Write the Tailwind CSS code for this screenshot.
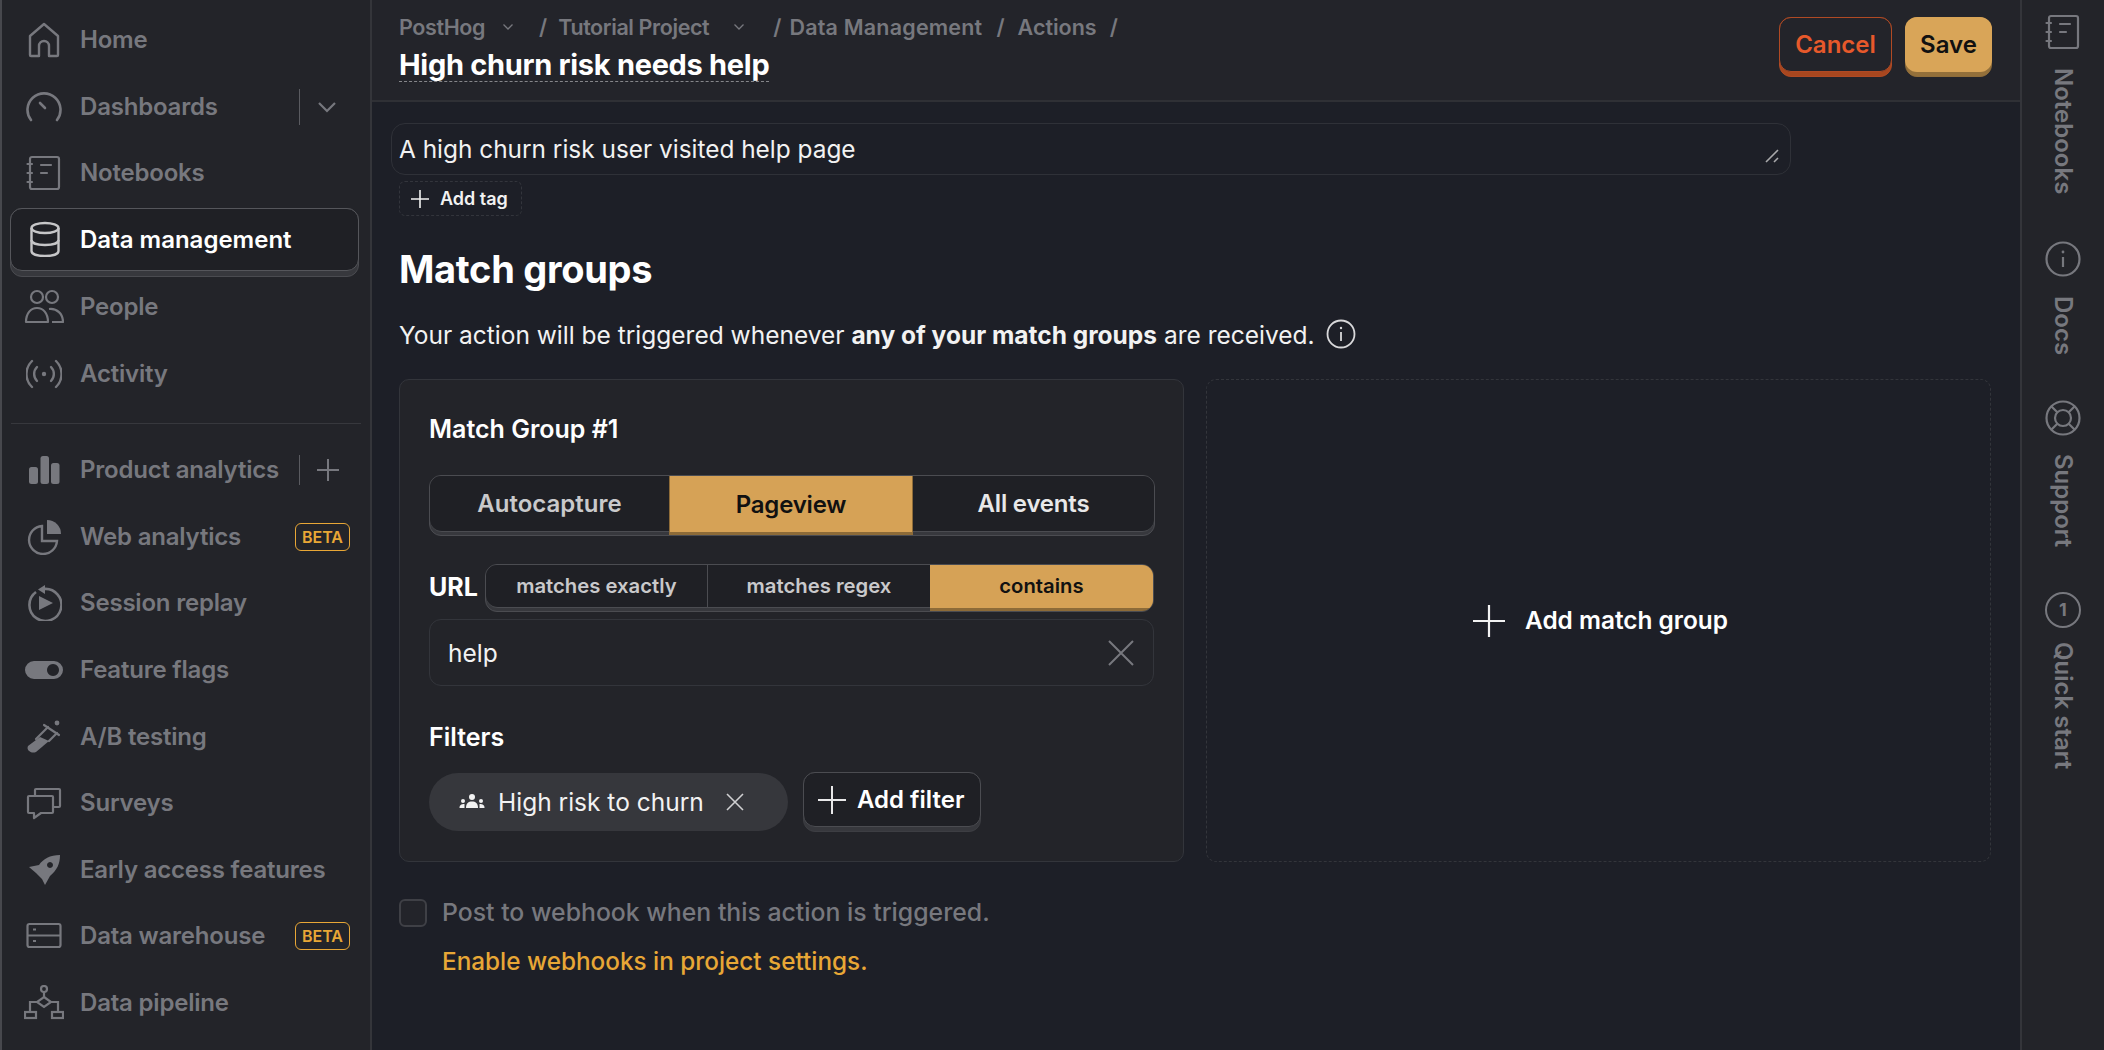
<!DOCTYPE html>
<html lang="en">
<head>
    <meta charset="UTF-8">
    <script src="https://cdn.jsdelivr.net/npm/@tailwindcss/browser@4"></script>
    <title>Action - PostHog</title>
</head>
<body class="bg-[#1d1f27] font-['Inter',sans-serif] overflow-hidden">
<div class="flex h-[1050px] w-[2104px]">

    <!-- Left nav -->
    <nav class="w-[372px] shrink-0 h-full bg-[#232429] border-l-2 border-l-[#47484d] border-r-2 border-r-[#34353a] pt-[7px] text-[24px] font-semibold text-[#77787e] tracking-[-0.2px] whitespace-nowrap">
        <div class="flex items-center h-[66.6px] pl-[24px] gap-[18px]">
            <svg class="w-9 h-9" viewBox="0 0 36 36" fill="none" stroke="currentColor" stroke-width="2.4" stroke-linejoin="round"><path d="M4 14 L18 2 L32 14 V33 a1 1 0 0 1 -1 1 H23 V24 a5 5 0 0 0 -10 0 V34 H5 a1 1 0 0 1 -1 -1 Z"/></svg>
            <span>Home</span>
        </div>
        <div class="flex items-center h-[66.6px] pl-[24px] gap-[18px]">
            <svg class="w-9 h-9" viewBox="0 0 36 36" fill="none" stroke="currentColor" stroke-width="2.6" stroke-linecap="round"><path d="M5 31 A16.5 16.5 0 1 1 31 31"/><path d="M14 14 L19 19"/></svg>
            <span>Dashboards</span>
            <span class="ml-auto h-9 w-px bg-[#5a5b60]"></span>
            <svg class="w-6 h-6 -ml-[3px] mr-[31px]" viewBox="0 0 24 24" fill="none" stroke="currentColor" stroke-width="2.2"><path d="M4 8 L12 16 L20 8"/></svg>
        </div>
        <div class="flex items-center h-[66.6px] pl-[24px] gap-[18px]">
            <svg class="w-9 h-9" viewBox="0 0 36 36" fill="none" stroke="currentColor" stroke-width="2.2" stroke-linecap="round"><rect x="4" y="2" width="29" height="32" rx="2"/><path d="M15 10 H25 M15 18 H21"/><path d="M1.5 9 H6 M1.5 18 H6 M1.5 27 H6"/></svg>
            <span>Notebooks</span>
        </div>
        <!-- active item -->
        <div class="ml-[8px] w-[349px] h-[69px] mt-[1px] rounded-[12px] border border-[#4a4b50] bg-[#37383d]">
            <div class="-m-px flex items-center h-[63px] pl-[15px] gap-[18px] rounded-[12px] border border-[#55565b] bg-[#1f2025] text-white tracking-normal">
                <svg class="w-9 h-9 ml-[1px] text-[#c6c6c8]" viewBox="0 0 36 36" fill="none" stroke="currentColor" stroke-width="2.4"><ellipse cx="18" cy="7" rx="13.5" ry="5"/><path d="M4.5 7 V30 C4.5 33 10 35 18 35 C26 35 31.5 33 31.5 30 V7"/><path d="M4.5 19 C4.5 22 10 24 18 24 C26 24 31.5 22 31.5 19"/></svg>
                <span class="-ml-[1px] pt-[2px]">Data management</span>
            </div>
        </div>
        <div class="flex items-center h-[66.6px] pl-[24px] gap-[18px] -mt-[3px]">
            <svg class="w-10 h-9 -ml-[2px] -mr-[2px]" viewBox="0 0 40 36" fill="none" stroke="currentColor" stroke-width="2.2" stroke-linejoin="round"><circle cx="13" cy="8" r="6"/><circle cx="28" cy="8" r="6"/><path d="M2 33 C2 24 7 19 13 19 C19 19 24 24 24 33 Z"/><path d="M25 20 C33 19 39 25 39 33 H28"/></svg>
            <span>People</span>
        </div>
        <div class="flex items-center h-[66.6px] pl-[24px] gap-[18px]">
            <svg class="w-9 h-9" viewBox="0 0 36 36" fill="none" stroke="currentColor" stroke-width="2.4" stroke-linecap="round"><circle cx="18" cy="18" r="2.2" fill="currentColor" stroke="none"/><path d="M11 11 A10 10 0 0 0 11 25 M25 11 A10 10 0 0 1 25 25"/><path d="M6 5 A18 18 0 0 0 6 31 M30 5 A18 18 0 0 1 30 31"/></svg>
            <span>Activity</span>
        </div>
        <div class="mx-[9px] mt-[16px] mb-[13px] h-px bg-[#37383d]"></div>
        <div class="flex items-center h-[66.6px] pl-[24px] gap-[18px]">
            <svg class="w-9 h-9" viewBox="0 0 36 36" fill="currentColor"><rect x="3" y="15" width="9" height="17" rx="2.5"/><rect x="14.5" y="4" width="8.5" height="28" rx="2.5"/><rect x="25" y="11" width="8.5" height="21" rx="2.5"/></svg>
            <span>Product analytics</span>
            <span class="ml-auto h-[30px] w-px bg-[#5a5b60]"></span>
            <svg class="w-6 h-6 -ml-[2px] mr-[30px]" viewBox="0 0 24 24" fill="none" stroke="currentColor" stroke-width="2"><path d="M12 1 V23 M1 12 H23"/></svg>
        </div>
        <div class="flex items-center h-[66.6px] pl-[24px] gap-[18px]">
            <svg class="w-9 h-9" viewBox="0 0 36 36" fill="none" stroke="currentColor" stroke-width="2.4"><path d="M16 7 A14 14 0 1 0 31 22 H16 Z"/><path d="M21 1 A14 14 0 0 1 35 15 H21 Z" fill="currentColor" stroke="none"/></svg>
            <span>Web analytics</span>
            <span class="ml-auto mr-[20px] w-[55px] h-[28px] flex items-center justify-center rounded-[6px] border border-[#e8a736] text-[#e8a736] text-[16px] font-semibold tracking-normal">BETA</span>
        </div>
        <div class="flex items-center h-[66.6px] pl-[24px] gap-[18px]">
            <svg class="w-9 h-9" viewBox="0 0 36 36" fill="none" stroke="currentColor" stroke-width="2.6"><path d="M10 7 A16 16 0 1 0 18 4"/><path d="M19 0 L12 4.5 L19 9 Z" fill="currentColor" stroke="none"/><path d="M13 11 L27 18 L13 25 Z" fill="currentColor" stroke="none"/></svg>
            <span>Session replay</span>
        </div>
        <div class="flex items-center h-[66.6px] pl-[24px] gap-[18px]">
            <svg class="w-10 h-9 -ml-[2px] -mr-[2px]" viewBox="0 0 40 36" fill="currentColor"><path fill-rule="evenodd" d="M10 9 H30 a9 9 0 0 1 0 18 H10 a9 9 0 0 1 0 -18 Z M29 12 a6 6 0 1 0 0.01 0 Z"/></svg>
            <span>Feature flags</span>
        </div>
        <div class="flex items-center h-[66.6px] pl-[24px] gap-[18px]">
            <svg class="w-9 h-9" viewBox="0 0 36 36" fill="none" stroke="currentColor" stroke-width="2.2" stroke-linecap="round" stroke-linejoin="round"><path d="M2 27 L14 18 L23 22 L10 33 C5 35 0 31 2 27 Z" fill="currentColor" stroke="none"/><path d="M10 20 L22 8 M23 22 L31 14"/><path d="M18 6 L33 16"/><circle cx="31" cy="4" r="2.4" fill="currentColor" stroke="none"/></svg>
            <span>A/B testing</span>
        </div>
        <div class="flex items-center h-[66.6px] pl-[24px] gap-[18px]">
            <svg class="w-9 h-9" viewBox="0 0 36 36" fill="none" stroke="currentColor" stroke-width="2.2" stroke-linejoin="round"><path d="M9 11 V5 a1 1 0 0 1 1 -1 H33 a1 1 0 0 1 1 1 V21 a1 1 0 0 1 -1 1 H27"/><path d="M3 11 H26 a1 1 0 0 1 1 1 V27 a1 1 0 0 1 -1 1 H15 L8 33 V28 H3 a1 1 0 0 1 -1 -1 V12 a1 1 0 0 1 1 -1 Z"/></svg>
            <span>Surveys</span>
        </div>
        <div class="flex items-center h-[66.6px] pl-[24px] gap-[18px]">
            <svg class="w-9 h-9" viewBox="0 0 36 36" fill="currentColor"><path fill-rule="evenodd" d="M34 3 C24 3 17 7 13 13 L3 15 L10 21 L16 27 L19 33 L24 24 C31 18 34 12 34 3 Z M24 10 a3 3 0 1 0 0.01 0 Z"/></svg>
            <span>Early access features</span>
        </div>
        <div class="flex items-center h-[66.6px] pl-[24px] gap-[18px]">
            <svg class="w-9 h-9" viewBox="0 0 36 36" fill="none" stroke="currentColor" stroke-width="2.2"><rect x="1.5" y="6" width="33" height="23" rx="2"/><path d="M1.5 17.5 H34.5"/><path d="M7 11.5 H10 M7 23 H10"/></svg>
            <span>Data warehouse</span>
            <span class="ml-auto mr-[20px] w-[55px] h-[28px] flex items-center justify-center rounded-[6px] border border-[#e8a736] text-[#e8a736] text-[16px] font-semibold tracking-normal">BETA</span>
        </div>
        <div class="flex items-center h-[66.6px] pl-[24px] gap-[18px]">
            <svg class="w-10 h-9 -ml-[2px] -mr-[2px]" viewBox="0 0 40 36" fill="none" stroke="currentColor" stroke-width="2.2"><circle cx="20" cy="4" r="3"/><path d="M20 7 V12"/><path d="M20 12 L27 17 L20 22 L13 17 Z"/><path d="M13 17 H6 V27 M27 17 H34 V27"/><rect x="1" y="27" width="11" height="6"/><rect x="28" y="27" width="11" height="6"/></svg>
            <span>Data pipeline</span>
        </div>
    </nav>

    <!-- Main column -->
    <div class="w-[1648px] shrink-0 flex flex-col">
        <header class="h-[102px] shrink-0 bg-[#23242a] border-b-2 border-[#2f3035] pl-[27px] pr-[28px] flex justify-between">
            <div>
                <div class="flex items-center mt-[15px] h-[24px] text-[21.5px] font-semibold text-[#77787e] whitespace-nowrap">
                    <span class="tracking-[-0.4px]">PostHog</span>
                    <svg class="w-3 h-3 ml-[17px]" viewBox="0 0 12 12" fill="none" stroke="currentColor" stroke-width="1.3"><path d="M1.5 3.5 L6 8 L10.5 3.5"/></svg>
                    <span class="ml-[25px] mr-[11px]">/</span>
                    <span class="tracking-[-0.4px]">Tutorial Project</span>
                    <svg class="w-3 h-3 ml-[24px]" viewBox="0 0 12 12" fill="none" stroke="currentColor" stroke-width="1.3"><path d="M1.5 3.5 L6 8 L10.5 3.5"/></svg>
                    <span class="ml-[28px] mr-[8px]">/</span>
                    <span class="tracking-[0.2px]">Data Management</span>
                    <span class="ml-[14px] mr-[13px]">/</span>
                    <span>Actions</span>
                    <span class="ml-[13px]">/</span>
                </div>
                <div class="mt-[10px] inline-block text-[29px] leading-[32px] font-bold text-white border-b border-dashed border-[#85868a] tracking-[-0.3px]">High churn risk needs help</div>
            </div>
            <div class="flex gap-[13px] pt-[17px]">
                <div class="w-[113px] h-[60px] rounded-[12px] border border-[#b04a24] bg-[#a8471f]">
                    <div class="-m-px h-[55px] rounded-[12px] border border-[#b04a24] bg-[#23242a] flex items-center justify-center text-[24px] font-semibold text-[#e7592b]">Cancel</div>
                </div>
                <div class="w-[87px] h-[60px] rounded-[12px] border border-[#8f6d3a] bg-[#94703a]">
                    <div class="-m-px h-[55px] rounded-[12px] bg-[#d9a558] flex items-center justify-center text-[24px] font-semibold text-[#111]">Save</div>
                </div>
            </div>
        </header>

        <main class="flex-1 pl-[27px] pr-[30px] pt-[21px] text-white">
            <div class="relative -ml-[8px] w-[1400px] h-[52px] rounded-[14px] border border-[#2f3138] pl-[7px] flex items-center text-[24.4px] text-[#f2f2f2]">
                A high churn risk user visited help page
                <svg class="absolute right-[10px] bottom-[10px] w-4 h-4" viewBox="0 0 16 16" fill="none" stroke="#a9a9ab" stroke-width="1.6"><path d="M2 14 L14 2 M10 14 L14 10"/></svg>
            </div>
            <div class="mt-[6px] w-[123px] h-[35px] rounded-[6px] border border-dashed border-[#33353c] flex items-center pl-[10px] gap-[10px] text-[18px] font-semibold text-[#f2f2f2] whitespace-nowrap">
                <svg class="w-[20px] h-[20px]" viewBox="0 0 20 20" fill="none" stroke="currentColor" stroke-width="1.6"><path d="M10 1 V19 M1 10 H19"/></svg>
                <span>Add tag</span>
            </div>

            <h2 class="mt-[30px] text-[38px] leading-[46px] font-bold tracking-[-0.3px]">Match groups</h2>
            <p class="mt-[26px] flex items-center text-[24.5px] leading-[34px] text-[#f2f2f2]">
                <span>Your action will be triggered whenever <b class="font-bold">any of your match groups</b> are received.</span>
                <svg class="ml-[11px] w-[30px] h-[30px] -mt-[2px]" viewBox="0 0 30 30" fill="none" stroke="#d8d8da" stroke-width="1.8"><circle cx="15" cy="15" r="13.5"/><path d="M15 13 V22"/><circle cx="15" cy="9" r="1.2" fill="#d8d8da" stroke="none"/></svg>
            </p>

            <div class="mt-[27px] grid grid-cols-[785px_785px] gap-[22px]">
                <div class="h-[483px] rounded-[10px] border border-[#33353b] bg-[#232429] pt-[29px] pl-[29px] pr-[29px]">
                    <h3 class="text-[25px] leading-[40px] font-semibold">Match Group #1</h3>

                    <div class="mt-[26px] flex h-[61px] w-[726px] rounded-[12px] border border-[#4b4c51] text-[24px] font-semibold text-[#c9c9cb] overflow-hidden bg-[#37383d]">
                        <div class="w-[239px] h-[56px] pt-px border-b border-[#4b4c51] bg-[#1f2025] rounded-bl-[12px] flex items-center justify-center">Autocapture</div>
                        <div class="w-[244px] h-full bg-[#8d6b38] border-x border-[#8d6b38] tracking-[-0.2px]"><div class="h-[56px] pt-px bg-[#d6a256] flex items-center justify-center text-[#111]">Pageview</div></div>
                        <div class="flex-1 h-[56px] pt-px border-b border-[#4b4c51] bg-[#1f2025] rounded-br-[12px] flex items-center justify-center text-[#e8e8e9] tracking-[-0.2px]">All events</div>
                    </div>

                    <div class="mt-[28px] flex items-center">
                        <span class="w-[56px] text-[25px] font-bold">URL</span>
                        <div class="flex h-[48px] w-[670px] rounded-[12px] border border-[#4b4c51] text-[20.3px] font-semibold text-[#c9c9cb] overflow-hidden bg-[#37383d]">
                            <div class="w-[222px] h-[43px] border-b border-r border-[#4b4c51] bg-[#1f2025] rounded-bl-[12px] flex items-center justify-center">matches exactly</div>
                            <div class="w-[222px] h-[43px] border-b border-[#4b4c51] bg-[#1f2025] flex items-center justify-center">matches regex</div>
                            <div class="flex-1 h-full bg-[#8d6b38]"><div class="h-[43px] bg-[#d6a256] flex items-center justify-center text-[#111]">contains</div></div>
                        </div>
                    </div>

                    <div class="mt-[7px] h-[67px] w-[725px] rounded-[12px] border border-[#33353b] flex items-center justify-between pl-[18px] pr-[19px] text-[24.5px] text-[#f2f2f2]">
                        <span class="pt-[2px]">help</span>
                        <svg class="w-[26px] h-[26px]" viewBox="0 0 26 26" fill="none" stroke="#77787e" stroke-width="2"><path d="M1 1 L25 25 M25 1 L1 25"/></svg>
                    </div>

                    <h4 class="mt-[34px] text-[25px] leading-[34px] font-semibold">Filters</h4>
                    <div class="mt-[19px] flex items-start gap-[15px]">
                        <div class="w-[359px] h-[58px] rounded-full bg-[#36373c] flex items-center pl-[30px] text-[24.5px] text-[#f2f2f2]">
                            <svg class="w-[26px] h-[22px]" viewBox="0 0 26 22" fill="currentColor"><circle cx="13" cy="6" r="3"/><path d="M7 17 C7 12 9.5 10.5 13 10.5 C16.5 10.5 19 12 19 17 Z"/><circle cx="4" cy="10" r="2"/><path d="M0.5 17 C0.5 14 2 13 5.5 13 V17 Z"/><circle cx="22" cy="10" r="2"/><path d="M25.5 17 C25.5 14 24 13 20.5 13 V17 Z"/></svg>
                            <span class="ml-[13px] whitespace-nowrap">High risk to churn</span>
                            <svg class="ml-[22px] w-[18px] h-[18px]" viewBox="0 0 18 18" fill="none" stroke="#d0d0d2" stroke-width="1.6"><path d="M1 1 L17 17 M17 1 L1 17"/></svg>
                        </div>
                        <div class="-mt-[1px] w-[178px] h-[60px] rounded-[12px] border border-[#3d3e43] bg-[#37383d]">
                            <div class="-m-px h-[55px] rounded-[12px] border border-[#4b4c51] bg-[#1f2025] flex items-center pl-[14px] gap-[11px] text-[24px] font-semibold whitespace-nowrap">
                                <svg class="w-[28px] h-[28px]" viewBox="0 0 28 28" fill="none" stroke="#e8e8e9" stroke-width="2"><path d="M14 0 V28 M0 14 H28"/></svg>
                                <span>Add filter</span>
                            </div>
                        </div>
                    </div>
                </div>

                <div class="h-[483px] rounded-[10px] border border-dashed border-[#33353b] flex items-center justify-center gap-[19px] pl-[3px] text-[24.4px] font-semibold">
                    <svg class="w-[34px] h-[34px]" viewBox="0 0 34 34" fill="none" stroke="#f2f2f2" stroke-width="2.2"><path d="M17 1 V33 M1 17 H33"/></svg>
                    <span>Add match group</span>
                </div>
            </div>

            <div class="mt-[32px] flex items-center gap-[15px] text-[24.8px] text-[#77787e] font-medium whitespace-nowrap">
                <span class="w-[28px] h-[28px] rounded-[6px] border-2 border-[#3f4046] bg-[#23242a]"></span>
                <span>Post to webhook when this action is triggered.</span>
            </div>
            <div class="mt-[12px] ml-[43px] text-[24.3px] font-medium text-[#e8a736]">Enable webhooks in project settings.</div>
        </main>
    </div>

    <!-- Right rail -->
    <aside class="flex-1 h-full bg-[#232429] border-l-2 border-[#34353a] pt-[14px] flex flex-col items-center text-[#77787e] text-[24px] font-semibold">
        <svg class="w-9 h-9" viewBox="0 0 36 36" fill="none" stroke="currentColor" stroke-width="2.2" stroke-linecap="round"><rect x="4" y="2" width="29" height="32" rx="2"/><path d="M15 10 H25 M15 18 H21"/><path d="M1.5 9 H6 M1.5 18 H6 M1.5 27 H6"/></svg>
        <span class="mt-[18px] [writing-mode:vertical-rl]">Notebooks</span>
        <svg class="mt-[47px] w-9 h-9" viewBox="0 0 36 36" fill="none" stroke="currentColor" stroke-width="2.2"><circle cx="18" cy="18" r="16.5"/><path d="M18 16 V26"/><circle cx="18" cy="11" r="1.4" fill="currentColor" stroke="none"/></svg>
        <span class="mt-[19px] [writing-mode:vertical-rl]">Docs</span>
        <svg class="mt-[45px] w-9 h-9" viewBox="0 0 36 36" fill="none" stroke="currentColor" stroke-width="2.2"><circle cx="18" cy="18" r="16.5"/><circle cx="18" cy="18" r="8"/><path d="M6.5 6.5 L12.3 12.3 M29.5 6.5 L23.7 12.3 M6.5 29.5 L12.3 23.7 M29.5 29.5 L23.7 23.7"/></svg>
        <span class="mt-[18px] [writing-mode:vertical-rl]">Support</span>
        <div class="mt-[44px] w-9 h-9 rounded-full border-2 border-[#77787e] flex items-center justify-center text-[18px] font-bold">1</div>
        <span class="mt-[14px] [writing-mode:vertical-rl]">Quick start</span>
    </aside>
</div>
</body>
</html>
